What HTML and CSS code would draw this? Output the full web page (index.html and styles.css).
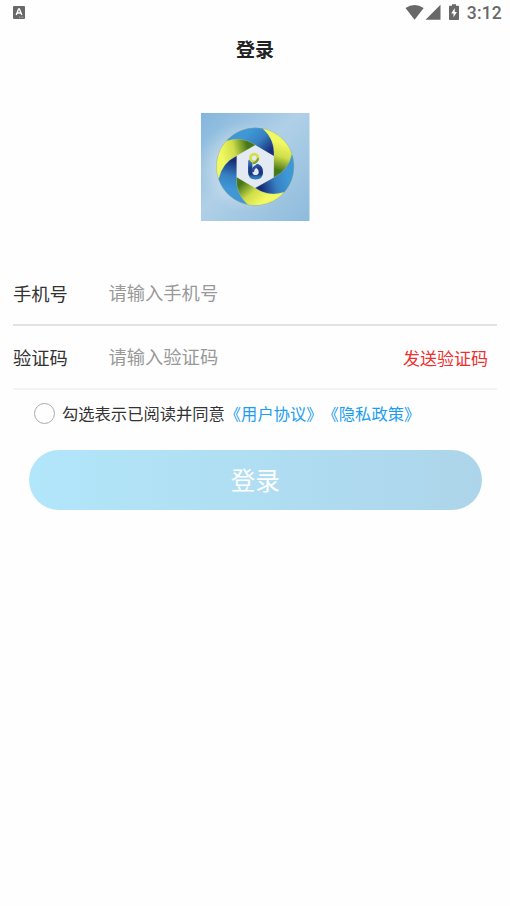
FILE: index.html
```html
<!DOCTYPE html>
<html lang="zh-CN">
<head>
<meta charset="utf-8">
<title>登录</title>
<link rel="stylesheet" href="styles.css">
</head>
<body>
<header class="status">
  <svg class="status-app" width="12" height="13" viewBox="0 0 12 13"><rect width="12" height="13" rx="1" fill="#686868"/><path d="M3.2 9 5.6 3h.8l2.4 6M4.2 7h3.6" fill="none" stroke="#fff" stroke-width="1.4"/><path d="M6 11.2h5" stroke="#ccc" stroke-width=".8" stroke-dasharray="1 .6"/></svg>
  <div class="status-right">
    <svg width="56" height="18" viewBox="0 0 56 18" fill="#686868"><path d="M.5 4.1Q9.5-2.1 18.7 4.1L9.6 15.8Z"/><path d="M35.5.8V15.8H20.5Z"/><path d="M47 .2h4v1.5h2.2q.8 0 .8.8v12.8q0 .8-.8.8h-8.4q-.8 0-.8-.8V2.5q0-.8.8-.8H47Z"/><path d="M49.8 4 46.2 9.4h2.3V13.3L51.9 7.9H49.8Z" fill="#fff"/></svg>
    <span class="clock">3:12</span>
  </div>
</header>
<h1 class="title">登录</h1>
<svg class="logo" viewBox="-163 -161 326 326">
  <defs>
    <linearGradient id="sky" x1="0" y1="0" x2="1" y2="1"><stop offset="0" stop-color="#82b5dc"/><stop offset=".45" stop-color="#b0d0e7"/><stop offset="1" stop-color="#8ebbdc"/></linearGradient>
    <radialGradient id="cloud"><stop offset="0" stop-color="#e5edf3" stop-opacity=".9"/><stop offset=".6" stop-color="#d2e2ee" stop-opacity=".55"/><stop offset="1" stop-color="#c5dbeb" stop-opacity="0"/></radialGradient>
    <linearGradient id="blue" gradientUnits="userSpaceOnUse" x1="-20" y1="-100" x2="40" y2="-40"><stop offset="0" stop-color="#3f97d5"/><stop offset=".45" stop-color="#3780c2"/><stop offset="1" stop-color="#172c78"/></linearGradient>
    <linearGradient id="lime" gradientUnits="userSpaceOnUse" x1="-20" y1="-105" x2="35" y2="-45"><stop offset="0" stop-color="#f0f862"/><stop offset=".48" stop-color="#cfdd49"/><stop offset="1" stop-color="#467719"/></linearGradient>
    <linearGradient id="mark" x1="0" y1="0" x2="0" y2="1"><stop offset="0" stop-color="#3f7cbc"/><stop offset=".4" stop-color="#1d3c8b"/><stop offset=".8" stop-color="#19357f"/><stop offset="1" stop-color="#2f78b9"/></linearGradient>
    <path id="blade" d="M-87-77A116 116 0 0 1 23-114Q60-81 56-32L0-65Q-40-92-87-77Z"/>
  </defs>
  <rect x="-163" y="-161" width="326" height="326" fill="url(#sky)"/>
  <ellipse cx="-30" cy="0" rx="145" ry="135" fill="url(#cloud)"/>
  <circle r="117.5" fill="#98aaa5"/>
  <path d="M0-66 57-33V33L0 66-57 33V-33Z" fill="#e3eaf3"/>
  <g stroke="#b5c784" stroke-width=".5">
    <use href="#blade" fill="url(#blue)"/>
    <use href="#blade" fill="url(#lime)" transform="rotate(60)"/>
    <use href="#blade" fill="url(#blue)" transform="rotate(120)"/>
    <use href="#blade" fill="url(#lime)" transform="rotate(180)"/>
    <use href="#blade" fill="url(#blue)" transform="rotate(240)"/>
    <use href="#blade" fill="url(#lime)" transform="rotate(300)"/>
  </g>
  <path d="M-15-15V17Q-15 32 1 32 17 32 17 16 17 4 7-1" fill="none" stroke="url(#mark)" stroke-width="13" stroke-linecap="round"/>
  <path d="M7-2Q-7 3-7 13" fill="none" stroke="#2a519a" stroke-width="8" stroke-linecap="round"/>
  <circle cx="-3" cy="-26" r="11.5" fill="none" stroke="#d3df45" stroke-width="8"/>
  <path d="M8-23Q6-14-5-10" fill="none" stroke="#7e9c39" stroke-width="6" stroke-linecap="round"/>
</svg>
<main class="form">
  <div class="row">
    <label class="label">手机号</label>
    <span class="hint">请输入手机号</span>
  </div>
  <div class="row row-code">
    <label class="label">验证码</label>
    <span class="hint">请输入验证码</span>
    <span class="send">发送验证码</span>
  </div>
  <div class="agree">
    <span class="radio"></span>
    <span class="agree-text">勾选表示已阅读并同意</span>
    <span class="link">《用户协议》</span>
    <span class="link">《隐私政策》</span>
  </div>
  <div class="submit">登录</div>
</main>
</body>
</html>
```

FILE: styles.css
```css
* { box-sizing: border-box; }
body {
  margin: 0;
  width: 510px;
  height: 906px;
  overflow: hidden;
  background: #fefefe;
  color: #333;
  font-family: "Noto Sans CJK SC", sans-serif;
  white-space: nowrap;
}
.status {
  height: 26px;
  display: flex;
  justify-content: space-between;
  padding: 0 8px 0 13px;
}
.status-app { margin-top: 6px; }
.status-right { display: flex; padding-top: 4px; gap: 6px; }
.clock {
  font: 500 17.5px/19px Roboto, sans-serif;
  letter-spacing: .2px;
  color: #686868;
}
.title {
  margin: 0;
  height: 46px;
  line-height: 46px;
  font-size: 19px;
  font-weight: 700;
  text-align: center;
  color: #222;
}
.logo {
  display: block;
  width: 108.5px;
  height: 108.5px;
  margin: 40.5px 0 0 201px;
}
.form { padding: 40px 13px 0; }
.row {
  display: flex;
  height: 65px;
  align-items: center;
  border-bottom: 2px solid #e2e2e2;
  font-size: 18.3px;
}
.row-code { height: 64px; border-color: #f3f3f3; }
.label { width: 95.5px; }
.hint { padding-bottom: 2px; color: #999; }
.send {
  margin-left: auto;
  margin-right: 9px;
  padding-top: 1px;
  font-size: 17px;
  color: #ee3030;
}
.agree {
  display: flex;
  align-items: center;
  height: 46px;
  padding-left: 21px;
  font-size: 16.3px;
}
.radio {
  width: 21px;
  height: 21px;
  border: 1.5px solid #aaa;
  border-radius: 50%;
  margin-right: 7px;
}
.link { color: #1d9df0; }
.submit {
  height: 60px;
  margin: 14px 15.5px 0 16px;
  border-radius: 30px;
  background: linear-gradient(90deg, #b2e6fa, #add5ea);
  color: #fff;
  font-size: 24.5px;
  line-height: 60px;
  text-align: center;
}
```
